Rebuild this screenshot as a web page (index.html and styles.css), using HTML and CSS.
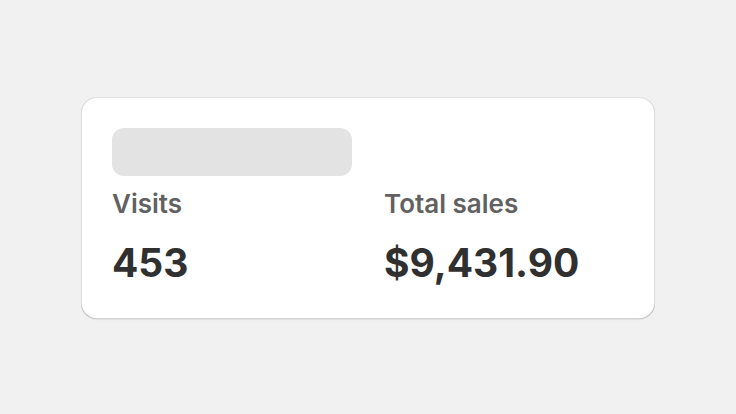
FILE: index.html
```html
<!DOCTYPE html>
<html lang="en">
<head>
<meta charset="utf-8">
<link rel="stylesheet" href="styles.css">
</head>
<body>
<div class="page">
  <div class="card">
    <div class="grid">
      <div class="skeleton"></div>
      <div></div>
      <div class="stat">
        <div class="label">Visits</div>
        <div class="value">453</div>
      </div>
      <div class="stat">
        <div class="label">Total sales</div>
        <div class="value">$9,431.90</div>
      </div>
    </div>
  </div>
</div>
</body>
</html>
```
FILE: styles.css
```css
html, body { margin: 0; padding: 0; }
body {
  background: #f1f1f1;
  font-family: Inter, "Noto Sans", sans-serif;
  width: 736px;
  height: 414px;
}
.page {
  box-sizing: border-box;
  height: 414px;
  padding-top: 97px;
  display: flex;
  align-items: flex-start;
  justify-content: center;
}
.card {
  width: 574px;
  box-sizing: border-box;
  background: #fff;
  border-radius: 16px;
  padding: 31px 33px 32px 31px;
  box-shadow: 0 1px 1px 0 rgba(26,26,26,0.08),
    inset 0 1px 0 0 rgba(204,204,204,0.5),
    inset 0 -1px 0 0 rgba(0,0,0,0.17),
    inset 1px 0 0 0 rgba(0,0,0,0.13),
    inset -1px 0 0 0 rgba(0,0,0,0.13);
}
.grid {
  display: grid;
  grid-template-columns: 1fr 1fr;
  column-gap: 32px;
  row-gap: 12px;
}
.skeleton {
  height: 48px;
  width: 240px;
  background: #e3e3e3;
  border-radius: 12px;
}
.stat {
  display: flex;
  flex-direction: column;
  gap: 19px;
}
.label {
  font-size: 26px;
  line-height: 32px;
  font-weight: 600;
  color: #616161;
}
.value {
  font-size: 39px;
  line-height: 48px;
  font-weight: 700;
  color: #303030;
}
```
